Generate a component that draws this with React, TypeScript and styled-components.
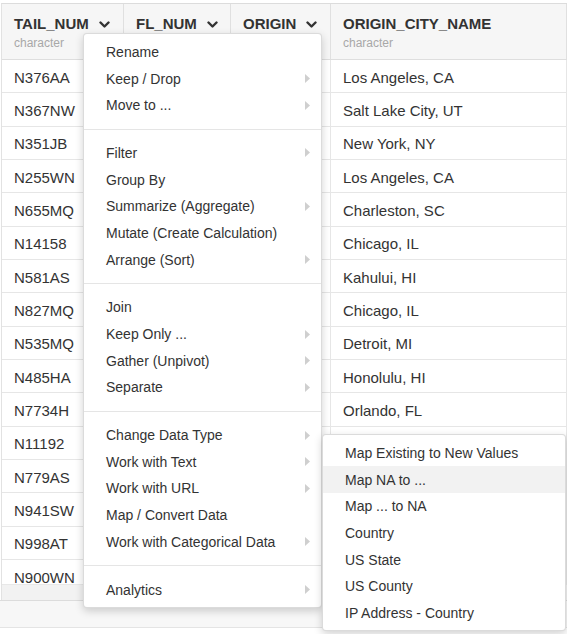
import React from "react";
import styled, { createGlobalStyle } from "styled-components";

const Global = createGlobalStyle`
  html, body { margin: 0; padding: 0; background: #fff; }
  body { font-family: "Liberation Sans", Arial, "Helvetica Neue", sans-serif; color: #333; }
`;

const Page = styled.div`
  position: relative;
  width: 567px;
  height: 634px;
  overflow: hidden;
  padding-top: 3px;
  box-sizing: border-box;
`;

const Table = styled.div`
  margin-left: 1px;
  border-top: 1px solid #dcdcdc;
  border-left: 1px solid #e2e2e2;
  width: 566px;
  box-sizing: border-box;
`;

const COLS = "122px 107px 100px 236px";

const HeaderRow = styled.div`
  display: grid;
  grid-template-columns: ${COLS};
  background: #f6f6f6;
  border-bottom: 1px solid #dedede;
`;

const HeaderCell = styled.div`
  padding: 9px 12px 8px;
  border-right: 1px solid #e0e0e0;
  display: flex;
  flex-direction: column;
  gap: 2px;
  overflow: hidden;
`;

const TitleLine = styled.div`
  display: flex;
  align-items: center;
  height: 20px;
  white-space: nowrap;
`;

const ColName = styled.span`
  font-size: 15px;
  font-weight: bold;
  color: #333;
`;

const Chevron = styled.svg`
  margin-left: 10px;
  margin-top: 3px;
  flex: none;
`;

const ColType = styled.span`
  font-size: 12px;
  line-height: 16px;
  height: 16px;
  color: #a8a8a8;
`;

const Body = styled.div`
  height: 524px;
  overflow: hidden;
`;

const Row = styled.div`
  display: grid;
  grid-template-columns: ${COLS};
  height: 33.33px;
  box-sizing: border-box;
  border-bottom: 1px solid #e6e6e6;
`;

const Cell = styled.div`
  padding: 2px 12px 0;
  border-right: 1px solid #e6e6e6;
  font-size: 15px;
  display: flex;
  align-items: center;
  white-space: nowrap;
  overflow: hidden;
  color: #333;
`;

const ScrollTrack = styled.div`
  height: 16px;
  background: #f2f2f2;
  border-top: 1px solid #e8e8e8;
  box-sizing: border-box;
`;

const Footer = styled.div`
  height: 28px;
  background: #f7f7f7;
  border-top: 1px solid #dcdcdc;
  border-bottom: 1px solid #e4e4e4;
  box-sizing: border-box;
`;

const Menu = styled.div<{ $left: number; $top: number; $width: number }>`
  position: absolute;
  left: ${(p) => p.$left}px;
  top: ${(p) => p.$top}px;
  width: ${(p) => p.$width}px;
  background: #fff;
  border: 1px solid rgba(0, 0, 0, 0.14);
  border-radius: 4px;
  box-shadow: 0 3px 8px rgba(0, 0, 0, 0.18);
  padding: 4.5px 0 4px;
  box-sizing: border-box;
`;

const Item = styled.div<{ $active?: boolean }>`
  height: 26.7px;
  display: flex;
  align-items: center;
  justify-content: space-between;
  padding: 0 11px 0 22px;
  font-size: 14px;
  color: #333;
  white-space: nowrap;
  background: ${(p) => (p.$active ? "#f2f2f2" : "transparent")};
`;

const Separator = styled.div`
  height: 1px;
  background: #e5e5e5;
  margin: 10px 0 10px;
`;

const Arrow = styled.svg`
  flex: none;
`;

const SubArrow = () => (
  <Arrow width="5" height="9" viewBox="0 0 5 9">
    <polygon points="0,0 5,4.5 0,9" fill="#cfcfcf" />
  </Arrow>
);

const Down = () => (
  <Chevron width="11" height="8" viewBox="0 0 11 8">
    <polyline points="1.5,1.5 5.5,5.5 9.5,1.5" fill="none" stroke="#333" strokeWidth="2.4" strokeLinecap="round" strokeLinejoin="round" />
  </Chevron>
);

// Column subtitles hidden beneath the open menu are left blank.
const columns = [
  { name: "TAIL_NUM", type: "character" },
  { name: "FL_NUM", type: "" },
  { name: "ORIGIN", type: "" },
  { name: "ORIGIN_CITY_NAME", type: "character", noChevron: true },
];

// Cells covered by the menus are left blank.
const rows: [string, string][] = [
  ["N376AA", "Los Angeles, CA"],
  ["N367NW", "Salt Lake City, UT"],
  ["N351JB", "New York, NY"],
  ["N255WN", "Los Angeles, CA"],
  ["N655MQ", "Charleston, SC"],
  ["N14158", "Chicago, IL"],
  ["N581AS", "Kahului, HI"],
  ["N827MQ", "Chicago, IL"],
  ["N535MQ", "Detroit, MI"],
  ["N485HA", "Honolulu, HI"],
  ["N7734H", "Orlando, FL"],
  ["N11192", ""],
  ["N779AS", ""],
  ["N941SW", ""],
  ["N998AT", ""],
  ["N900WN", ""],
];

type MI = { label: string; sub?: boolean } | "sep";

const menuItems: MI[] = [
  { label: "Rename" },
  { label: "Keep / Drop", sub: true },
  { label: "Move to ...", sub: true },
  "sep",
  { label: "Filter", sub: true },
  { label: "Group By" },
  { label: "Summarize (Aggregate)", sub: true },
  { label: "Mutate (Create Calculation)" },
  { label: "Arrange (Sort)", sub: true },
  "sep",
  { label: "Join" },
  { label: "Keep Only ...", sub: true },
  { label: "Gather (Unpivot)", sub: true },
  { label: "Separate", sub: true },
  "sep",
  { label: "Change Data Type", sub: true },
  { label: "Work with Text", sub: true },
  { label: "Work with URL", sub: true },
  { label: "Map / Convert Data" },
  { label: "Work with Categorical Data", sub: true },
  "sep",
  { label: "Analytics", sub: true },
];

const subItems = [
  "Map Existing to New Values",
  "Map NA to ...",
  "Map ... to NA",
  "Country",
  "US State",
  "US County",
  "IP Address - Country",
];

export default function App() {
  return (
    <Page>
      <Global />
      <Table>
        <HeaderRow>
          {columns.map((c) => (
            <HeaderCell key={c.name}>
              <TitleLine>
                <ColName>{c.name}</ColName>
                {!c.noChevron && <Down />}
              </TitleLine>
              <ColType>{c.type}</ColType>
            </HeaderCell>
          ))}
        </HeaderRow>
        <Body>
          {rows.map((r) => (
            <Row key={r[0]}>
              <Cell>{r[0]}</Cell>
              <Cell />
              <Cell />
              <Cell>{r[1]}</Cell>
            </Row>
          ))}
        </Body>
        <ScrollTrack />
      </Table>
      <Footer />

      <Menu $left={83} $top={33} $width={239}>
        {menuItems.map((m, i) =>
          m === "sep" ? (
            <Separator key={i} />
          ) : (
            <Item key={i}>
              <span>{m.label}</span>
              {m.sub && <SubArrow />}
            </Item>
          )
        )}
      </Menu>

      <Menu $left={322} $top={434} $width={244}>
        {subItems.map((s, i) => (
          <Item key={s} $active={i === 1}>
            <span>{s}</span>
          </Item>
        ))}
      </Menu>
    </Page>
  );
}
